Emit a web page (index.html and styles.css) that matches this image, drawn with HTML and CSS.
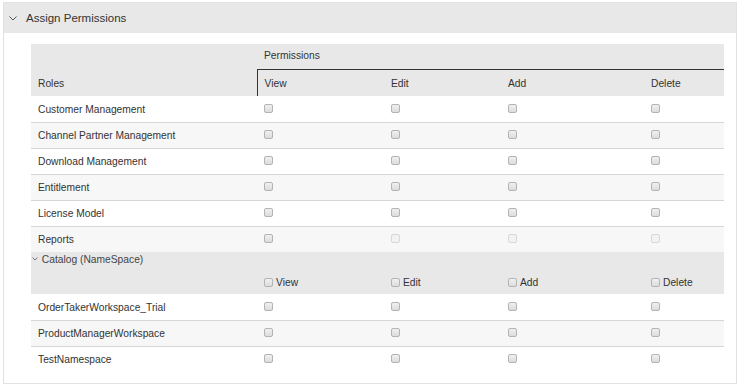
FILE: index.html
```html
<!DOCTYPE html>
<html lang="en">
<head>
    <meta charset="UTF-8">
    <title>Assign Permissions</title>
    <link rel="stylesheet" href="styles.css">
</head>
<body>
    <div class="panel">
        <div class="panel-head">
            <svg class="chev" width="8" height="5" viewBox="0 0 8 5"><path d="M0.5 0.5 L4 4 L7.5 0.5" fill="none" stroke="#555" stroke-width="1"/></svg>
            <span>Assign Permissions</span>
        </div>

        <div class="panel-body">
            <table class="perm-table">
                <colgroup>
                    <col style="width:226px">
                    <col style="width:127px">
                    <col style="width:117px">
                    <col style="width:143px">
                    <col style="width:80px">
                </colgroup>
                <thead>
                    <tr class="head-top">
                        <th rowspan="2" class="roles">Roles</th>
                        <th colspan="4" class="perm">Permissions</th>
                    </tr>
                    <tr class="head-sub">
                        <th class="first">View</th>
                        <th>Edit</th>
                        <th>Add</th>
                        <th>Delete</th>
                    </tr>
                </thead>
                <tbody>
                    <tr><td>Customer Management</td><td><input type="checkbox"></td><td><input type="checkbox"></td><td><input type="checkbox"></td><td><input type="checkbox"></td></tr>
                    <tr class="alt"><td>Channel Partner Management</td><td><input type="checkbox"></td><td><input type="checkbox"></td><td><input type="checkbox"></td><td><input type="checkbox"></td></tr>
                    <tr><td>Download Management</td><td><input type="checkbox"></td><td><input type="checkbox"></td><td><input type="checkbox"></td><td><input type="checkbox"></td></tr>
                    <tr class="alt"><td>Entitlement</td><td><input type="checkbox"></td><td><input type="checkbox"></td><td><input type="checkbox"></td><td><input type="checkbox"></td></tr>
                    <tr><td>License Model</td><td><input type="checkbox"></td><td><input type="checkbox"></td><td><input type="checkbox"></td><td><input type="checkbox"></td></tr>
                    <tr class="alt last"><td>Reports</td><td><input type="checkbox"></td><td><input type="checkbox" disabled></td><td><input type="checkbox" disabled></td><td><input type="checkbox" disabled></td></tr>

                    <tr class="group-title">
                        <td colspan="5">
                            <svg class="chev-sm" width="6" height="4" viewBox="0 0 6 4"><path d="M0.5 0.5 L3 3 L5.5 0.5" fill="none" stroke="#666" stroke-width="0.9"/></svg>
                            Catalog (NameSpace)
                        </td>
                    </tr>
                    <tr class="group-sub">
                        <td></td>
                        <td><label><input type="checkbox"> View</label></td>
                        <td><label><input type="checkbox"> Edit</label></td>
                        <td><label><input type="checkbox"> Add</label></td>
                        <td><label><input type="checkbox"> Delete</label></td>
                    </tr>

                    <tr><td>OrderTakerWorkspace_Trial</td><td><input type="checkbox"></td><td><input type="checkbox"></td><td><input type="checkbox"></td><td><input type="checkbox"></td></tr>
                    <tr class="alt"><td>ProductManagerWorkspace</td><td><input type="checkbox"></td><td><input type="checkbox"></td><td><input type="checkbox"></td><td><input type="checkbox"></td></tr>
                    <tr class="last"><td>TestNamespace</td><td><input type="checkbox"></td><td><input type="checkbox"></td><td><input type="checkbox"></td><td><input type="checkbox"></td></tr>
                </tbody>
            </table>
        </div>
    </div>
</body>
</html>
```

FILE: styles.css
```css
* {
    box-sizing: border-box;
    margin: 0;
    padding: 0;
}

body {
    font-family: 'Liberation Sans', Arial, sans-serif;
    background-color: #fff;
    color: #333;
}

.panel {
    margin: 2px 3px 3px 3px;
    border: 1px solid #e2e2e2;
}

.panel-head {
    display: flex;
    align-items: center;
    height: 30px;
    padding-left: 5px;
    background-color: #e8e8e8;
    font-size: 11.5px;
    color: #333;
}

.chev {
    margin-right: 9px;
}

.panel-body {
    padding: 11px 12px 11px 27px;
}

.perm-table {
    width: 693px;
    border-collapse: collapse;
    table-layout: fixed;
    font-size: 10.25px;
}

.perm-table th {
    font-weight: normal;
    text-align: left;
    background-color: #e8e8e8;
    color: #333;
    padding: 0 7px;
}

.head-top th {
    height: 25px;
}

.head-top .roles {
    vertical-align: bottom;
    padding-bottom: 7px;
}

.head-top .perm {
    border-bottom: 1px solid #333;
    padding-bottom: 1px;
}

.head-sub th {
    height: 27px;
    padding-top: 2px;
}

.head-sub .first {
    border-left: 1px solid #333;
}

.perm-table td {
    height: 26px;
    padding: 1px 7px 0;
    border-bottom: 1px solid #d6d6d6;
    vertical-align: middle;
}

.perm-table tr.alt td {
    background-color: #f7f7f7;
}

.perm-table tr.last td {
    border-bottom: none;
}

.perm-table .group-title td,
.perm-table .group-sub td {
    background-color: #e8e8e8;
    border-bottom: none;
}

.perm-table .group-title td {
    height: 18px;
    padding: 2px 0 0 1px;
    vertical-align: top;
    color: #444;
}

.chev-sm {
    vertical-align: middle;
    margin-right: 1px;
    margin-top: -2px;
}

.perm-table .group-sub td {
    height: 24px;
    padding-top: 1px;
}

.group-sub label {
    display: inline-flex;
    align-items: center;
    gap: 3px;
    color: #333;
}

input[type="checkbox"] {
    appearance: none;
    -webkit-appearance: none;
    display: inline-block;
    width: 9px;
    height: 9px;
    border: 1px solid #b4b4b4;
    border-radius: 2px;
    background: linear-gradient(#f0f0f0, #dcdcdc);
    vertical-align: middle;
    position: relative;
    top: -2px;
}

input[type="checkbox"]:disabled {
    border-color: #d8d8d8;
    background: #f2f2f2;
}

.group-sub input[type="checkbox"] {
    top: 0;
}
```
